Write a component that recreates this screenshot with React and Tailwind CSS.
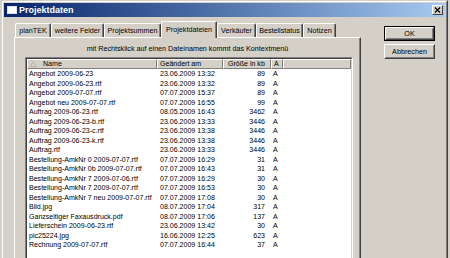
import React from "react";

const rows = [
  ["Angebot 2009-06-23", "23.06.2009 13:32", "89"],
  ["Angebot 2009-06-23.rtf", "23.06.2009 13:32", "89"],
  ["Angebot 2009-07-07.rtf", "07.07.2009 15:37", "89"],
  ["Angebot neu 2009-07-07.rtf", "07.07.2009 16:55", "99"],
  ["Auftrag 2009-06-23.rtf", "08.05.2009 16:43", "3462"],
  ["Auftrag 2009-06-23-b.rtf", "23.06.2009 13:33", "3446"],
  ["Auftrag 2009-06-23-c.rtf", "23.06.2009 13:38", "3446"],
  ["Auftrag 2009-06-23-k.rtf", "23.06.2009 13:38", "3446"],
  ["Auftrag.rtf", "23.06.2009 13:33", "3446"],
  ["Bestellung-AmkNr 0 2009-07-07.rtf", "07.07.2009 16:29", "31"],
  ["Bestellung-AmkNr 0b 2009-07-07.rtf", "07.07.2009 16:43", "31"],
  ["Bestellung-AmkNr 7 2009-07-06.rtf", "07.07.2009 16:29", "30"],
  ["Bestellung-AmkNr 7 2009-07-07.rtf", "07.07.2009 16:53", "30"],
  ["Bestellung-AmkNr 7 neu 2009-07-07.rtf", "07.07.2009 17:08", "30"],
  ["Bild.jpg", "08.07.2009 17:04", "317"],
  ["Ganzseitiger Faxausdruck.pdf", "08.07.2009 17:06", "137"],
  ["Lieferschein 2009-06-23.rtf", "23.06.2009 13:42", "30"],
  ["pic25224.jpg", "16.06.2009 12:25", "623"],
  ["Rechnung 2009-07-07.rtf", "07.07.2009 16:44", "37"],
];

const tabs = [
  ["planTEK", "w-[36px]"],
  ["weitere Felder", "w-[53px]"],
  ["Projektsummen", "w-[57px]"],
  ["Projektdateien", "w-[56px]", true],
  ["Verkäufer", "w-[39px]"],
  ["Bestellstatus", "w-[47px]"],
  ["Notizen", "w-[33px]"],
];

function Tab({ label, w, sel }) {
  if (sel) {
    return (
      <div
        className={`${w} h-[17px] -mb-px relative z-10 bg-[#d4d0c8] border-l border-t border-r border-l-white border-t-white border-r-[#404040] shadow-[inset_-1px_0_#808080] rounded-t-[2px] flex items-start justify-center pt-[3px] leading-[9px]`}
      >
        {label}
      </div>
    );
  }
  return (
    <div
      className={`${w} h-[14px] bg-[#d4d0c8] border-l border-t border-r border-l-white border-t-white border-r-[#404040] shadow-[inset_-1px_0_#808080] rounded-t-[2px] flex items-start justify-center pt-[2px] leading-[9px]`}
    >
      {label}
    </div>
  );
}

function Btn({ label, def }) {
  const inner = (
    <div className="w-full h-full border border-t-white border-l-white border-r-[#404040] border-b-[#404040]">
      <div className="w-full h-full border border-t-[#d4d0c8] border-l-[#d4d0c8] border-r-[#808080] border-b-[#808080] flex items-center justify-center leading-[9px]">
        {label}
      </div>
    </div>
  );
  if (def) {
    return <div className="w-[51px] h-[15px] border border-black">{inner}</div>;
  }
  return <div className="w-[51px] h-[15px]">{inner}</div>;
}

export default function App() {
  return (
    <div
      className="w-[450px] h-[258px] overflow-hidden bg-[#d4d0c8] text-black text-[7.2px]"
      style={{ fontFamily: '"Liberation Sans", Arial, sans-serif' }}
    >
      <div className="ml-px w-[447px] h-[320px] border border-t-[#d4d0c8] border-l-[#d4d0c8] border-r-[#404040] border-b-[#404040]">
        <div className="w-full h-full border border-t-white border-l-white border-r-[#808080] border-b-[#808080] p-px bg-[#d4d0c8]">
          {/* Title bar */}
          <div className="h-[14px] bg-linear-to-r from-[#0a246a] to-[#a6caf0] flex items-center">
            <div className="ml-[3px] w-[10px] h-[8px] bg-white border border-[#d8e4f8]" />
            <div className="ml-[2px] text-white font-bold text-[9px] leading-[10px]">Projektdaten</div>
            <div className="ml-auto mr-[2px] w-[11px] h-[10px] bg-[#d4d0c8] border border-t-white border-l-white border-r-[#404040] border-b-[#404040] flex items-center justify-center">
              <svg width="7" height="6" viewBox="0 0 7 6">
                <path d="M1 0.5 L6 5.5 M6 0.5 L1 5.5" stroke="#000" strokeWidth="1.3" />
              </svg>
            </div>
          </div>

          {/* Content */}
          <div className="flex">
            <div className="pl-[10px] pt-[4px]">
              <div className="flex items-end pl-px">
                {tabs.map(([l, w, s]) => (
                  <Tab key={l} label={l} w={w} sel={s} />
                ))}
              </div>
              <div className="w-[347px] h-[240px] border-l border-t border-r border-l-white border-t-white border-r-[#404040] shadow-[inset_-1px_0_#808080]">
                <div className="text-center pt-[6px] leading-[9px]">
                  mit Rechtsklick auf einen Dateinamen kommt das Kontextmenü
                </div>
                <div className="mt-[4px] ml-[10px] w-[328px] h-[220px] border border-t-[#808080] border-l-[#808080] border-r-white border-b-white">
                  <div className="w-full h-full border border-t-[#404040] border-l-[#404040] border-r-[#d4d0c8] border-b-[#d4d0c8] bg-white text-[7.05px]">
                    {/* header */}
                    <div className="flex h-[10px] leading-[8px]">
                      <div className="w-[130px] bg-[#d4d0c8] border border-t-white border-l-white border-r-[#808080] border-b-[#808080] flex items-center">
                        <svg className="ml-[2px]" width="7" height="6" viewBox="0 0 7 6">
                          <path d="M3.5 0.5 L6.5 5.5 L0.5 5.5 Z" fill="none" stroke="#b0aca4" strokeWidth="0.8" />
                        </svg>
                        <span className="ml-[6px]">Name</span>
                      </div>
                      <div className="w-[66px] bg-[#d4d0c8] border border-t-white border-l-white border-r-[#808080] border-b-[#808080] pl-[2px] flex items-center">
                        Geändert am
                      </div>
                      <div className="w-[48px] bg-[#d4d0c8] border border-t-white border-l-white border-r-[#808080] border-b-[#808080] pl-[4px] flex items-center">
                        Größe in kb
                      </div>
                      <div className="w-[12px] bg-[#d4d0c8] border border-t-white border-l-white border-r-[#808080] border-b-[#808080] pl-[2px] flex items-center">
                        A
                      </div>
                      <div className="flex-1 bg-[#d4d0c8] border border-t-white border-l-white border-r-[#808080] border-b-[#808080]" />
                    </div>
                    {/* rows */}
                    {rows.map(([n, d, s]) => (
                      <div key={n} className="flex h-[9.5px] leading-[9.5px] whitespace-nowrap">
                        <div className="w-[130px] pl-[2px] overflow-hidden">{n}</div>
                        <div className="w-[66px] pl-[3px]">{d}</div>
                        <div className="w-[48px] pr-[6px] text-right">{s}</div>
                        <div className="w-[12px] pl-[2px]">A</div>
                      </div>
                    ))}
                  </div>
                </div>
              </div>
            </div>
            <div className="ml-[23px] mt-[9px] flex flex-col gap-[3px]">
              <Btn label="OK" def />
              <Btn label="Abbrechen" />
            </div>
          </div>
        </div>
      </div>
    </div>
  );
}
